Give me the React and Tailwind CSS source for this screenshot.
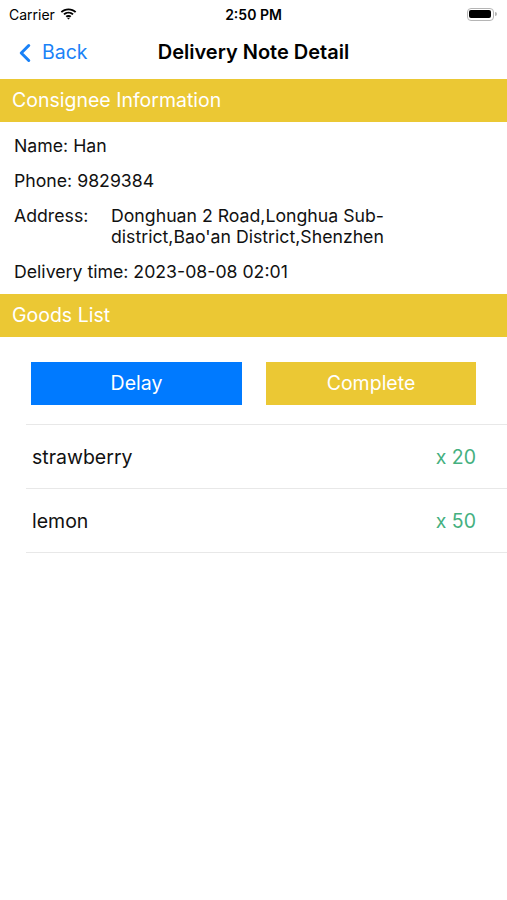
import { ChevronLeft } from 'lucide-react'

const goods = [
  { name: 'strawberry', qty: 20 },
  { name: 'lemon', qty: 50 },
]

function StatusBar() {
  return (
    <div className="h-[28px] flex items-center justify-between px-[9px] text-[14px] text-black">
      <div className="flex items-center gap-[5px] w-[120px]">
        <span>Carrier</span>
        <svg width="17" height="12" viewBox="0 0 17 12">
          <path d="M8.5 2.2c2.5 0 4.8 1 6.5 2.6l1.3-1.3C14.3 1.6 11.5.4 8.5.4S2.7 1.6.7 3.5L2 4.8C3.7 3.2 6 2.2 8.5 2.2z" fill="#000" />
          <path d="M8.5 5.6c1.5 0 2.9.6 3.9 1.5l1.3-1.3C12.3 4.5 10.5 3.8 8.5 3.8S4.7 4.5 3.3 5.8l1.3 1.3c1-.9 2.4-1.5 3.9-1.5z" fill="#000" />
          <path d="M8.5 8.9c.6 0 1.1.2 1.5.6l1.4-1.4c-.8-.7-1.8-1.1-2.9-1.1s-2.1.4-2.9 1.1L7 9.5c.4-.4.9-.6 1.5-.6zM8.5 11.6l1.3-1.3c-.3-.3-.8-.5-1.3-.5s-1 .2-1.3.5z" fill="#000" />
        </svg>
      </div>
      <span className="font-semibold">2:50 PM</span>
      <div className="w-[120px] flex justify-end pr-[1px]">
        <div className="flex items-center">
          <div className="w-[27px] h-[13px] rounded-[4px] border border-[#b5b5b5] p-[1.5px]">
            <div className="w-full h-full rounded-[2px] bg-black" />
          </div>
          <div className="w-[2px] h-[4px] rounded-r-sm bg-[#b5b5b5] ml-[1px]" />
        </div>
      </div>
    </div>
  )
}

function SectionHeader({ title }) {
  return (
    <div className="h-[43px] bg-[#ebc834] flex items-center px-[12px] text-white text-[19.5px]">
      {title}
    </div>
  )
}

export default function App() {
  return (
    <div
      className="w-[507px] h-[900px] bg-white overflow-hidden"
      style={{ fontFamily: 'Inter, "Liberation Sans", sans-serif' }}
    >
      <StatusBar />

      <div className="h-[51px] relative flex items-center pb-[1px]">
        <div className="flex items-center text-[#1a82f7] pl-[10px]">
          <ChevronLeft size={30} strokeWidth={2.4} />
          <span className="text-[19.5px] ml-[2px]">Back</span>
        </div>
        <div className="absolute inset-0 flex items-center justify-center pointer-events-none pb-[3px]">
          <span className="text-[20px] font-semibold text-black">Delivery Note Detail</span>
        </div>
      </div>

      <SectionHeader title="Consignee Information" />

      <div className="px-[14px] text-[17.7px] text-[#111] pt-[13px] pb-[12px] flex flex-col gap-[14px]">
        <div className="leading-[21px]">Name: Han</div>
        <div className="leading-[21px]">Phone: 9829384</div>
        <div className="flex leading-[21px]">
          <span className="w-[97px] shrink-0">Address:</span>
          <span className="w-[300px]">Donghuan 2 Road,Longhua Sub-district,Bao'an District,Shenzhen</span>
        </div>
        <div className="leading-[21px]">Delivery time: 2023-08-08 02:01</div>
      </div>

      <SectionHeader title="Goods List" />

      <div className="flex justify-between px-[31px] pt-[25px] pb-[19px]">
        <button className="w-[211px] h-[43px] bg-[#007aff] text-white text-[19.5px]">Delay</button>
        <button className="w-[210px] h-[43px] bg-[#ebc834] text-white text-[19.5px]">Complete</button>
      </div>

      <div className="ml-[26px] border-t border-[#e8e8e8]">
        {goods.map((g) => (
          <div
            key={g.name}
            className="h-[64px] flex items-center justify-between pl-[6px] pr-[31px] pt-[3px] border-b border-[#e8e8e8]"
          >
            <span className="text-[19.5px] text-[#111]">{g.name}</span>
            <span className="text-[19.5px] text-[#45b07f]">x {g.qty}</span>
          </div>
        ))}
      </div>
    </div>
  )
}
